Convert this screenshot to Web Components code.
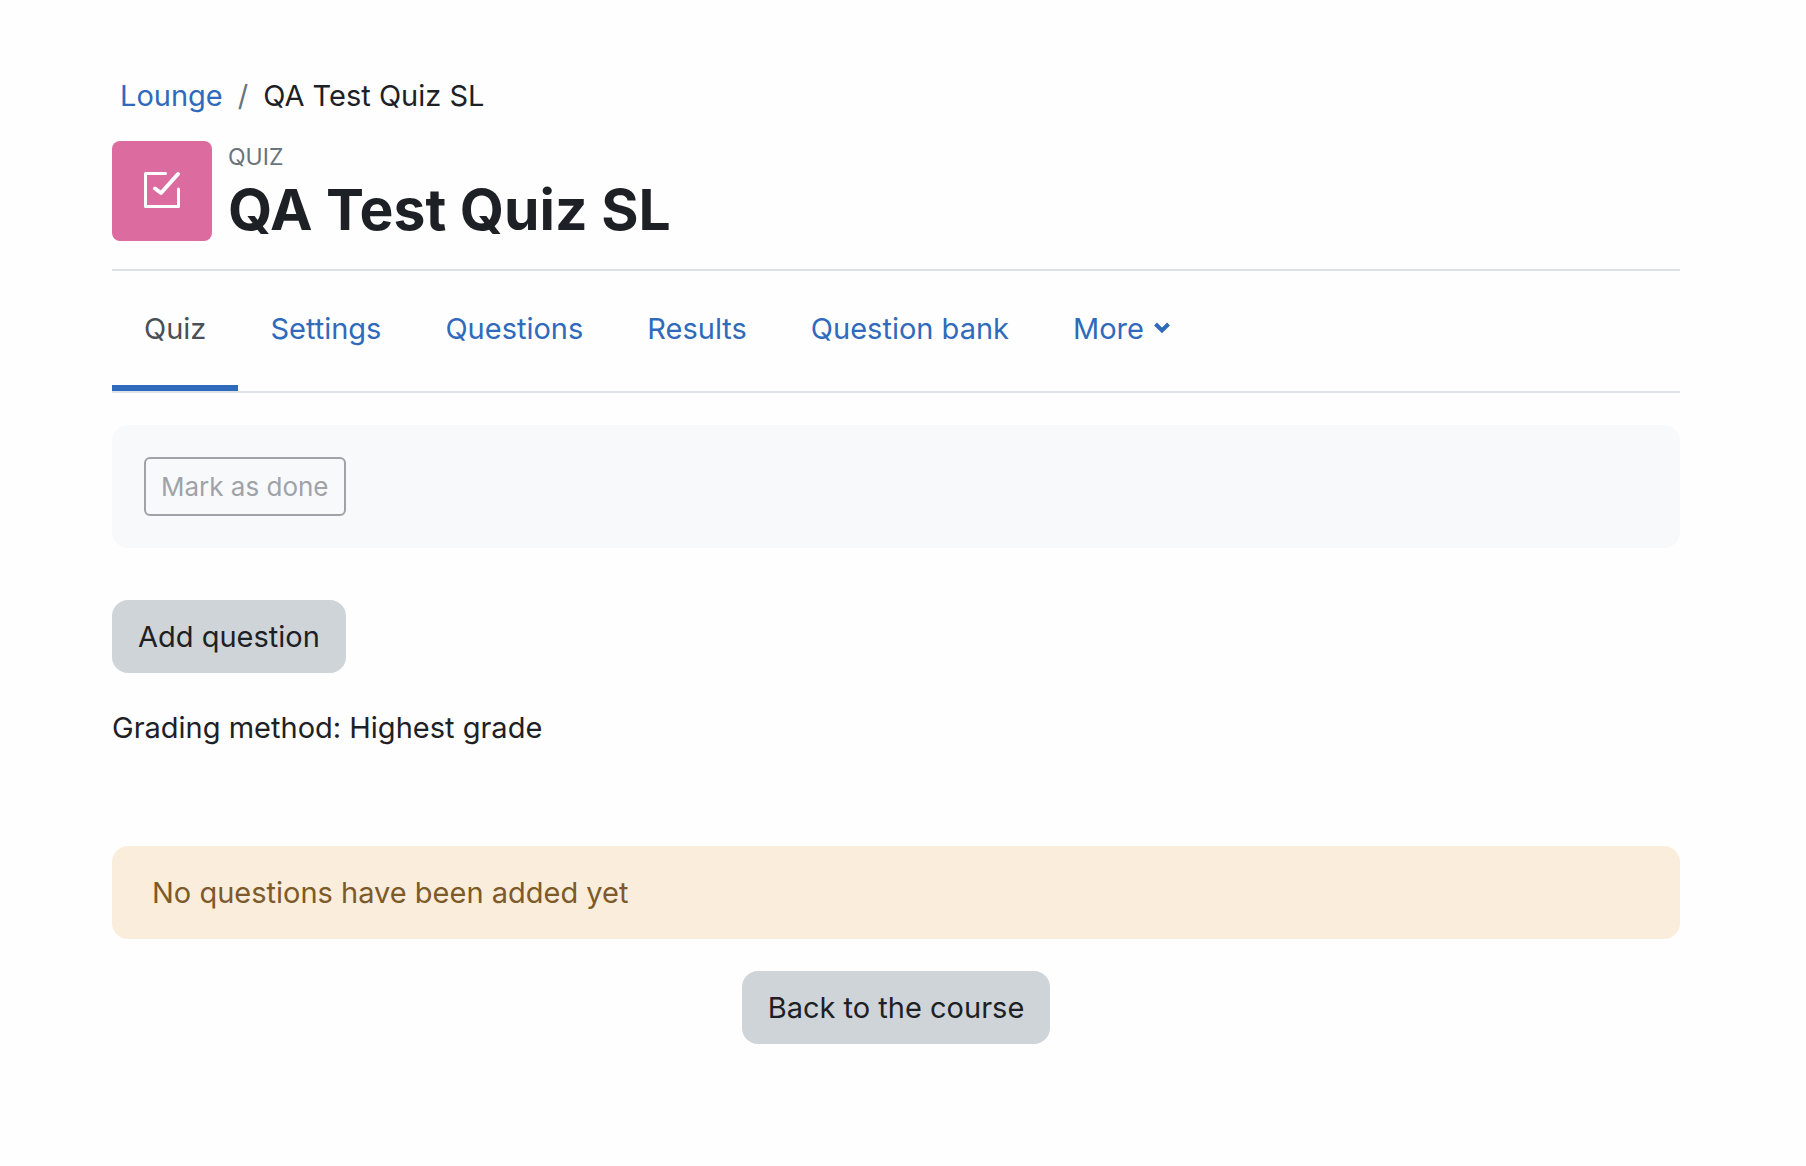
<!DOCTYPE html>
<html lang="en">
<head>
<meta charset="utf-8">
<meta name="viewport" content="width=device-width, initial-scale=1">
<title>QA Test Quiz SL</title>
<style>
  :root {
    --primary: #2f6abc;
    --text: #1d2125;
    --muted: #6a737b;
    --border: #dee2e6;
    --secondary: #cfd4d8;
  }
  body {
    margin: 0;
    background-color: #fefefe;
    color: var(--text);
    font-family: Inter, "Liberation Sans", sans-serif;
    font-size: 29px;
    line-height: 45px;
  }
  .grading {
    margin: 32px 0 96px;
  }
</style>
</head>
<body>
  <quiz-page>
    <quiz-breadcrumb slot="header" parent="Lounge" current="QA Test Quiz SL"></quiz-breadcrumb>
    <quiz-header slot="header" type="Quiz">QA Test Quiz SL</quiz-header>
    <quiz-tabs slot="header">
      <quiz-tab active>Quiz</quiz-tab>
      <quiz-tab>Settings</quiz-tab>
      <quiz-tab>Questions</quiz-tab>
      <quiz-tab>Results</quiz-tab>
      <quiz-tab>Question bank</quiz-tab>
      <quiz-tab dropdown>More</quiz-tab>
    </quiz-tabs>
    <quiz-completion>Mark as done</quiz-completion>
    <quiz-button>Add question</quiz-button>
    <p class="grading">Grading method: Highest grade</p>
    <quiz-alert>No questions have been added yet</quiz-alert>
    <quiz-button centered>Back to the course</quiz-button>
  </quiz-page>

<script>
// Clones the markup of a component into its open shadow root
function renderShadow(element, html) {
  const template = document.createElement("template");
  template.innerHTML = html.trim();
  element.attachShadow({ mode: "open" }).appendChild(template.content);
}

class QuizPage extends HTMLElement {
  constructor() {
    super();
    renderShadow(this, `
    <style>
      :host {
        display: block;
        padding: 73px 126px 96px 112px;
      }
    </style>
    <header><slot name="header"></slot></header>
    <main><slot></slot></main>
    `);
  }
}

class QuizBreadcrumb extends HTMLElement {
  constructor() {
    super();
    renderShadow(this, `
    <style>
      :host {
        display: block;
        padding: 0 8px;
      }
      ol {
        display: flex;
        gap: 15px;
        margin: 0;
        padding: 0;
        list-style: none;
      }
      li + li {
        display: flex;
        gap: 15px;
      }
      li + li::before {
        content: "/";
        color: var(--muted);
      }
      a {
        color: var(--primary);
        text-decoration: none;
      }
    </style>
    <nav aria-label="Breadcrumb">
      <ol>
        <li><a href="#">${this.getAttribute("parent")}</a></li>
        <li><span>${this.getAttribute("current")}</span></li>
      </ol>
    </nav>
    `);
  }
}

class QuizHeader extends HTMLElement {
  constructor() {
    super();
    renderShadow(this, `
    <style>
      :host {
        display: flex;
        align-items: flex-start;
        gap: 16px;
        padding: 23px 0 22px;
        border-bottom: 2px solid var(--border);
      }
      .icon {
        display: grid;
        place-items: center;
        flex: none;
        width: 100px;
        height: 100px;
        border-radius: 8px;
        background-color: #dc6ca0;
      }
      .type {
        color: var(--muted);
        font-size: 23px;
        line-height: 32px;
        text-transform: uppercase;
      }
      h1 {
        margin: 0;
        font-size: 57px;
        font-weight: 700;
        line-height: 74px;
      }
    </style>
    <div class="icon">
      <svg width="48" height="48" viewBox="0 0 48 48" fill="none" stroke="#fff" stroke-linecap="round" stroke-linejoin="round" aria-hidden="true">
        <path stroke-width="3" d="M27.5 6.5h-20v33h33V22"/>
        <path stroke-width="4" d="M17 21.5l6 4.5L40 7"/>
      </svg>
    </div>
    <div>
      <div class="type">${this.getAttribute("type")}</div>
      <h1><slot></slot></h1>
    </div>
    `);
  }
}

class QuizTabs extends HTMLElement {
  constructor() {
    super();
    renderShadow(this, `
    <style>
      :host {
        display: block;
        margin-bottom: 32px;
        border-bottom: 2px solid var(--border);
      }
      nav {
        display: flex;
        flex-wrap: wrap;
      }
    </style>
    <nav aria-label="Quiz"><slot></slot></nav>
    `);
  }
}

class QuizTab extends HTMLElement {
  constructor() {
    super();
    const chevron = `
      <svg width="16" height="12" viewBox="0 0 16 12" fill="none" stroke="currentColor" stroke-width="4" aria-hidden="true">
        <path d="M1.5 2L8 8.5 14.5 2"/>
      </svg>`;
    renderShadow(this, `
    <style>
      :host {
        display: block;
      }
      a {
        display: flex;
        align-items: center;
        gap: 10px;
        height: 114px;
        padding: 0 32px;
        border-bottom: 6px solid transparent;
        color: var(--primary);
        text-decoration: none;
      }
      :host([active]) a {
        border-bottom-color: var(--primary);
        color: #495057;
      }
    </style>
    <a href="#"><slot></slot>${this.hasAttribute("dropdown") ? chevron : ""}</a>
    `);
  }
}

class QuizCompletion extends HTMLElement {
  constructor() {
    super();
    renderShadow(this, `
    <style>
      :host {
        display: flex;
        margin-bottom: 52px;
        padding: 32px;
        border-radius: 16px;
        background-color: #f8f9fa;
      }
      button {
        padding: 8px 15px;
        border: 2px solid #9fa3a8;
        border-radius: 6px;
        background-color: transparent;
        color: #9fa3a8;
        font: inherit;
        font-size: 26px;
        line-height: 39px;
      }
    </style>
    <button type="button" disabled><slot></slot></button>
    `);
  }
}

class QuizButton extends HTMLElement {
  constructor() {
    super();
    renderShadow(this, `
    <style>
      :host {
        display: flex;
      }
      :host([centered]) {
        justify-content: center;
        margin-top: 32px;
      }
      button {
        padding: 14px 26px;
        border: 0;
        border-radius: 16px;
        background-color: var(--secondary);
        color: inherit;
        font: inherit;
      }
    </style>
    <button type="button"><slot></slot></button>
    `);
  }
}

class QuizAlert extends HTMLElement {
  constructor() {
    super();
    renderShadow(this, `
    <style>
      :host {
        display: block;
        padding: 24px 40px;
        border-radius: 16px;
        background-color: #faeddc;
        color: #7d5a29;
      }
    </style>
    <div role="alert"><slot></slot></div>
    `);
  }
}

window.customElements.define("quiz-page", QuizPage);
window.customElements.define("quiz-breadcrumb", QuizBreadcrumb);
window.customElements.define("quiz-header", QuizHeader);
window.customElements.define("quiz-tabs", QuizTabs);
window.customElements.define("quiz-tab", QuizTab);
window.customElements.define("quiz-completion", QuizCompletion);
window.customElements.define("quiz-button", QuizButton);
window.customElements.define("quiz-alert", QuizAlert);
</script>
</body>
</html>
